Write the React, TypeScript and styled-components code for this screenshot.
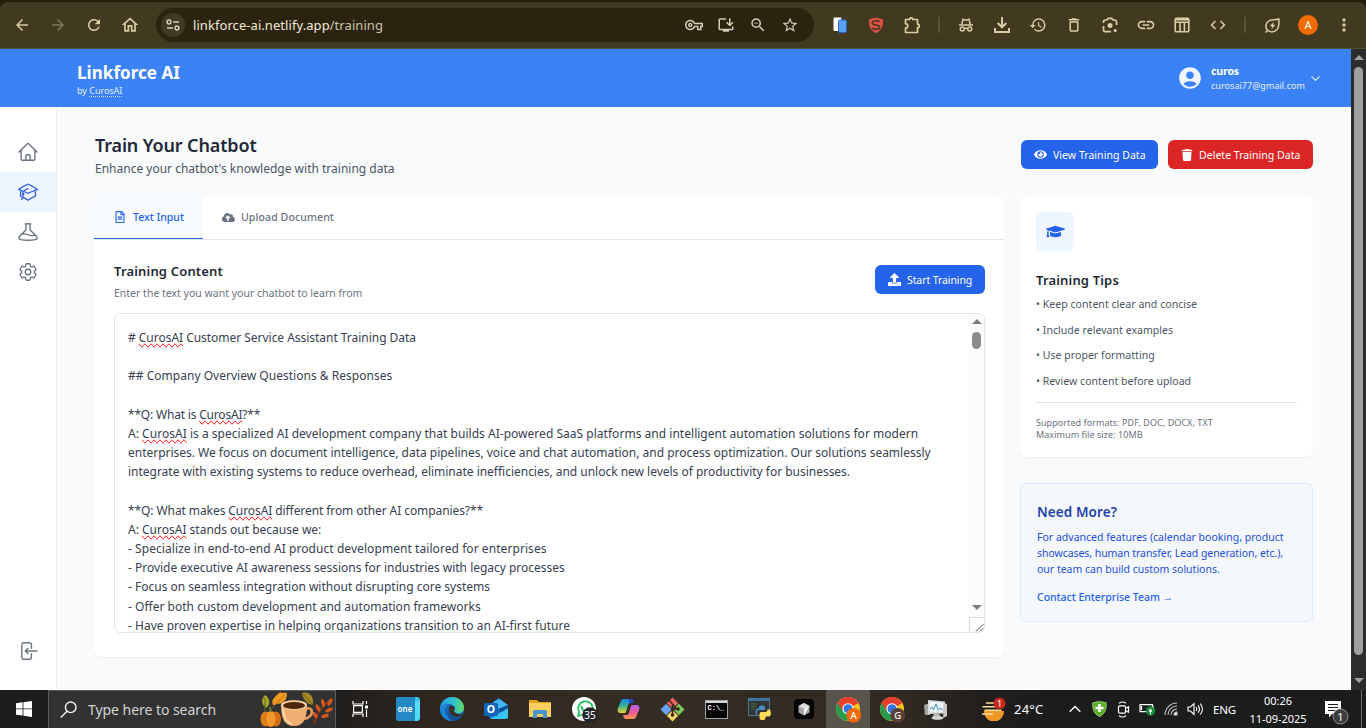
import React from "react";
import styled, { createGlobalStyle, css } from "styled-components";
import {
  MdArrowBack, MdArrowForward, MdRefresh, MdOutlineHome, MdOutlineVpnKey, MdOutlineInstallDesktop,
  MdZoomOut, MdStarBorder, MdOutlineExtension, MdHistory, MdDeleteOutline, MdLink, MdCode,
  MdMoreVert, MdAccountCircle,
} from "react-icons/md";
import {
  HiOutlineHome, HiOutlineAcademicCap, HiOutlineBeaker, HiOutlineCog6Tooth, HiOutlineArrowLeftOnRectangle,
} from "react-icons/hi2";
import { FaRegFileAlt, FaCloudUploadAlt, FaEye, FaTrash, FaUpload, FaGraduationCap } from "react-icons/fa";
import { ChevronDown } from "lucide-react";

const Global = createGlobalStyle`
  *, *::before, *::after { box-sizing: border-box; }
  body { margin: 0; overflow: hidden; font-family: "Noto Sans", "Open Sans", sans-serif; }
  svg { display: block; flex: none; }
`;

const Screen = styled.div`
  display: flex;
  flex-direction: column;
  width: 1366px;
  height: 728px;
  overflow: hidden;
`;

/* ---------- browser toolbar ---------- */

const TabEdge = styled.div`
  height: 49px;
  flex: none;
  padding-top: 2px;
  background: #251d08;
`;
const Toolbar = styled.div`
  display: flex;
  align-items: center;
  height: 47px;
  padding: 0 4px;
  border-bottom: 1px solid #575038;
  border-radius: 8px 8px 0 0;
  background: #413920;
  color: #d8cda5;
`;
const ToolCell = styled.div<{ $dim?: boolean }>`
  display: flex;
  align-items: center;
  justify-content: center;
  width: 36px;
  height: 36px;
  flex: none;
  color: ${(p) => (p.$dim ? "#7f775c" : "inherit")};
`;
const ToolDivider = styled.div`
  width: 2px;
  height: 16px;
  margin: 0 8px;
  background: #5b5338;
`;
const Omnibox = styled.div`
  display: flex;
  align-items: center;
  width: 658px;
  height: 34px;
  margin: 0 8px;
  padding: 0 8px 0 5px;
  border-radius: 17px;
  background: #2b230d;
  color: #d3ccbb;
`;
const SiteInfo = styled.div`
  display: flex;
  align-items: center;
  justify-content: center;
  width: 24px;
  height: 24px;
  border-radius: 50%;
  background: #413920;
`;
const Url = styled.div`
  flex: 1;
  margin-left: 8px;
  font-size: 13px;
  line-height: 18px;
  letter-spacing: 0.065px;
  color: #f0ead8;
`;
const UrlPath = styled.span`
  color: #c9c3ae;
`;
const OmniCell = styled.div`
  display: flex;
  justify-content: center;
  width: 32px;
`;
const Profile = styled.div`
  width: 20px;
  height: 20px;
  border-radius: 50%;
  background: #f06c00;
  color: #fff;
  font-size: 11px;
  line-height: 20px;
  text-align: center;
`;

/* ---------- page ---------- */

const Viewport = styled.div`
  display: flex;
  height: 641px;
  flex: none;
`;
const Page = styled.div`
  display: flex;
  flex-direction: column;
  width: 1351px;
`;
const Header = styled.header`
  display: flex;
  justify-content: space-between;
  height: 58px;
  padding: 13px 28px 0 77px;
  background: #3b82f6;
  color: #fff;
`;
const Logo = styled.div`
  font-size: 17px;
  font-weight: 700;
  line-height: 22px;
  letter-spacing: 0.053px;
`;
const Byline = styled.div`
  font-size: 9px;
  line-height: 13px;
  color: #e3edfe;
`;
const BylineLink = styled.span`
  border-bottom: 1px dotted #cfe0fd;
  display: inline-block;
  line-height: 10px;
  letter-spacing: -0.05px;
`;
const Account = styled.div`
  display: flex;
  height: 32px;
  align-items: center;
`;
const AccountText = styled.div`
  margin: -1px 3px 0 8px;
`;
const AccountName = styled.div`
  font-size: 10.5px;
  font-weight: 700;
  line-height: 15px;
  letter-spacing: -0.11px;
`;
const AccountMail = styled.div`
  font-size: 9px;
  line-height: 13px;
  letter-spacing: 0.044px;
  color: #e6effe;
`;
const Body = styled.div`
  display: flex;
  flex: 1;
`;
const Sidebar = styled.nav`
  display: flex;
  flex-direction: column;
  width: 57px;
  padding: 25px 0 19px;
  border-right: 1px solid #f1f2f4;
  background: #fff;
`;
const SideItem = styled.div<{ $active?: boolean; $last?: boolean }>`
  display: flex;
  align-items: center;
  justify-content: center;
  height: 40px;
  color: ${(p) => (p.$active ? "#3e68df" : "#6b7280")};
  background: ${(p) => (p.$active ? "#eff6ff" : "transparent")};
  ${(p) => p.$last && css`margin-top: auto;`}
`;
const Main = styled.main`
  flex: 1;
  padding: 24px 38px 0 37px;
  background: #f9fafc;
`;
const TitleRow = styled.div`
  display: flex;
  justify-content: space-between;
  height: 65px;
`;
const Title = styled.h1`
  margin: 1px 0 0 1px;
  font-size: 18px;
  font-weight: 600;
  line-height: 26px;
  letter-spacing: -0.14px;
  color: #1f2937;
`;
const Subtitle = styled.div`
  margin: 1px 0 0 1px;
  font-size: 12px;
  line-height: 19px;
  color: #4b5563;
`;
const Actions = styled.div`
  display: flex;
  gap: 10px;
  padding-top: 9px;
`;
const Button = styled.button<{ $color: string; $width: number; $ls: number }>`
  display: flex;
  align-items: center;
  gap: 6px;
  width: ${(p) => p.$width}px;
  height: 29px;
  padding: 0 0 0 13px;
  border: 0;
  border-radius: 6px;
  background: ${(p) => p.$color};
  color: #fff;
  font: 400 10.5px/16px "Noto Sans", sans-serif;
  letter-spacing: ${(p) => p.$ls}px;
  white-space: nowrap;
`;
const Columns = styled.div`
  display: flex;
  align-items: flex-start;
  gap: 16px;
`;
const Card = styled.section`
  border-radius: 7px;
  background: #fff;
  box-shadow: 0 1px 2px rgba(0, 0, 0, 0.05);
`;
const EditorCard = styled(Card)`
  width: 910px;
  height: 461px;
  overflow: hidden;
`;
const Tabs = styled.div`
  display: flex;
  height: 44px;
  border-bottom: 1px solid #e5e7eb;
`;
const Tab = styled.div<{ $active?: boolean }>`
  display: flex;
  align-items: center;
  gap: ${(p) => (p.$active ? 7 : 6)}px;
  height: 43px;
  padding: ${(p) => (p.$active ? "0 19px 0 20px" : "0 19px 1px")};
  font-size: 10.5px;
  font-weight: 500;
  letter-spacing: ${(p) => (p.$active ? 0.014 : 0.122)}px;
  color: ${(p) => (p.$active ? "#2563eb" : "#6b7280")};
  ${(p) => p.$active && css`
    background: #f7fbff;
    border-bottom: 1px solid #2563eb;
  `}
`;
const EditorBody = styled.div`
  padding: 20px 19px 0 20px;
`;
const EditorHead = styled.div`
  display: flex;
  justify-content: space-between;
  height: 53px;
`;
const EditorTitle = styled.h2`
  margin: 1px 0 0;
  font-size: 13px;
  font-weight: 600;
  line-height: 20px;
  letter-spacing: 0.17px;
  color: #1f2937;
`;
const EditorHint = styled.div`
  margin-top: 4px;
  font-size: 10.5px;
  line-height: 16px;
  color: #6b7280;
`;
const StartWrap = styled.div`
  padding-top: 5px;
`;
const TextBox = styled.div`
  display: flex;
  width: 871px;
  height: 320px;
  border: 1px solid #e3e5e9;
  border-radius: 6px;
  overflow: hidden;
`;
const TextLines = styled.div`
  flex: 1;
  padding: 14px 0 0 13px;
  font-size: 12px;
  line-height: 19.2px;
  white-space: pre;
  color: #374151;
`;
const TextLine = styled.div<{ $ls?: number }>`
  height: 19.2px;
  letter-spacing: ${(p) => p.$ls ?? 0}px;
`;
const Misspelled = styled.span`
  text-decoration-line: spelling-error;
`;
const ScrollColumn = styled.div`
  display: flex;
  flex-direction: column;
  align-items: center;
  width: 15px;
  padding-top: 5px;
  background: #fcfcfc;
`;
const Arrow = styled.div<{ $down?: boolean; $color: string }>`
  width: 0;
  height: 0;
  border: 5px solid transparent;
  ${(p) => p.$down
    ? css`border-top-color: ${p.$color}; border-bottom: 0;`
    : css`border-bottom-color: ${p.$color}; border-top: 0;`}
`;
const InnerThumb = styled.div`
  width: 9px;
  height: 17px;
  margin: 8px 0 auto;
  border-radius: 5px;
  background: #8b8b8b;
`;
const Grip = styled.div`
  width: 15px;
  height: 15px;
  margin-top: 7px;
  border-left: 1px solid #dcdcdc;
  border-top: 1px solid #dcdcdc;
  background: #fff;
`;
const SideColumn = styled.aside`
  width: 293px;
`;
const TipsCard = styled(Card)`
  height: 261px;
  padding: 16px;
`;
const CapBadge = styled.div`
  display: flex;
  align-items: center;
  justify-content: center;
  width: 38px;
  height: 39px;
  border-radius: 6px;
  background: #eff6ff;
  color: #2563eb;
`;
const TipsTitle = styled.h2`
  margin: 19px 0 5px;
  font-size: 13px;
  font-weight: 600;
  line-height: 20px;
  letter-spacing: 0.167px;
  color: #1f2937;
`;
const Tip = styled.div`
  height: 25.7px;
  font-size: 10.5px;
  line-height: 19px;
  letter-spacing: 0.045px;
  color: #4b5563;
`;
const Formats = styled.div`
  margin-top: 4px;
  padding-top: 14px;
  border-top: 1px solid #e5e7eb;
  font-size: 9px;
  line-height: 12px;
  letter-spacing: 0.06px;
  color: #6b7280;
`;
const HelpCard = styled.section`
  height: 139px;
  margin-top: 26px;
  padding: 17px 0 0 16px;
  border: 1px solid #dbeafe;
  border-radius: 6px;
  background: #f4f8fd;
`;
const HelpTitle = styled.h2`
  margin: 0 0 6px;
  font-size: 13.5px;
  font-weight: 600;
  line-height: 22px;
  letter-spacing: 0.1px;
  color: #1e40af;
`;
const HelpText = styled.div<{ $ls: number }>`
  font-size: 10.5px;
  line-height: 16px;
  letter-spacing: ${(p) => p.$ls}px;
  white-space: nowrap;
  color: #1d4ed8;
`;
const HelpLink = styled.div`
  margin-top: 12px;
  font-size: 10.5px;
  font-weight: 500;
  line-height: 16px;
  letter-spacing: -0.02px;
  color: #2563eb;
`;
const PageScroll = styled.div`
  display: flex;
  flex-direction: column;
  align-items: center;
  width: 15px;
  padding: 6px 0 7px;
  background: #2c2c2c;
`;
const PageThumb = styled.div`
  flex: 1;
  width: 9px;
  margin: 7px 0 23px;
  border-radius: 5px;
  background: #9f9f9f;
`;

/* ---------- taskbar ---------- */

const Taskbar = styled.footer`
  display: flex;
  align-items: center;
  height: 38px;
  flex: none;
  background: linear-gradient(90deg, #1b1c1c 0, #201e1d 340px, #30271f 430px, #352d24 620px, #312a22 900px, #221f1d 975px, #1b1c1c 1060px, #1b1c1c 100%);
  color: #fff;
`;
const StartButton = styled.div`
  display: flex;
  justify-content: center;
  width: 48px;
`;
const SearchBox = styled.div`
  display: flex;
  align-items: center;
  width: 288px;
  height: 38px;
  padding: 0 2px 0 11px;
  border: 1px solid #5c5c5c;
  border-bottom: 0;
  background: #323232;
`;
const SearchText = styled.span`
  flex: 1;
  margin: 1px 0 0 11px;
  font-size: 14px;
  line-height: 20px;
  letter-spacing: -0.046px;
  color: #d4d4d4;
`;
const TaskCell = styled.div<{ $active?: boolean; $width?: number; $shift?: number }>`
  display: flex;
  align-items: center;
  justify-content: center;
  width: ${(p) => p.$width ?? 44}px;
  height: 38px;
  padding-left: ${(p) => p.$shift ?? 0}px;
  flex: none;
  background: ${(p) => (p.$active ? "#58534d" : "transparent")};
`;
const Temperature = styled.div`
  width: 49px;
  font-size: 13px;
  letter-spacing: 0.2px;
`;
const TrayCell = styled.div`
  display: flex;
  justify-content: center;
  width: 24px;
`;
const Language = styled.div`
  width: 32px;
  padding-left: 6px;
  font-size: 11.5px;
  letter-spacing: -0.15px;
`;
const Clock = styled.div`
  width: 78px;
  padding-top: 1px;
  font-size: 11px;
  line-height: 18px;
  letter-spacing: -0.03px;
  text-align: center;
`;
const Notice = styled.div`
  width: 30px;
  margin: 6px 0 0 7px;
`;
const ShowDesktop = styled.div`
  width: 1px;
  height: 38px;
  margin-left: 7px;
  background: #6b6b6b;
`;

/* ---------- drawings ---------- */

const Tune = () => (
  <svg width="14" height="14" viewBox="0 0 14 14" fill="none" stroke="currentColor" strokeWidth="1.5">
    <circle cx="3" cy="4" r="1.9" /><path d="M7 4h6" /><circle cx="11" cy="10" r="1.9" /><path d="M1 10h6" />
  </svg>
);
const Incognito = () => (
  <svg width="16" height="16" viewBox="0 0 16 16" fill="none" stroke="currentColor" strokeWidth="1.5">
    <path d="M1 8h14M3.8 7.5 5 2.2l3 .9 3-.9 1.2 5.3" /><circle cx="4.3" cy="12" r="2" /><circle cx="11.7" cy="12" r="2" /><path d="M6.3 11.7q1.7-1 3.4 0" />
  </svg>
);
const Download = () => (
  <svg width="18" height="18" viewBox="0 0 18 18" fill="none" stroke="currentColor" strokeWidth="2">
    <path d="M9 1v10M4.7 7 9 11.3 13.3 7M2 12v4h14v-4" />
  </svg>
);
const Lens = () => (
  <svg width="16" height="16" viewBox="0 0 16 16" fill="none" stroke="currentColor" strokeWidth="1.7">
    <path d="M1.5 6V4.8a1.8 1.8 0 0 1 1.8-1.8H5l1.2-1.6h3.6L11 3h1.7a1.8 1.8 0 0 1 1.8 1.8V8M1.5 9v3.8a1.8 1.8 0 0 0 1.8 1.8H9" />
    <circle cx="8" cy="8.4" r="2.5" fill="currentColor" stroke="none" /><circle cx="13.2" cy="13.4" r="1.5" fill="currentColor" stroke="none" />
  </svg>
);
const PuzzlePiece = () => (
  <svg width="17" height="17" viewBox="0 0 17 17" fill="none" stroke="currentColor" strokeWidth="1.700" strokeLinejoin="round">
    <path d="M1.500 2.500h4a1.700 1.700 0 0 1 3.400 0h4.600v4.600a1.800 1.800 0 0 1 0 3.600v4.800h-12v-4.300c3-.3 3-4.200 0-4.500z" />
  </svg>
);
const TableIcon = () => (
  <svg width="16" height="16" viewBox="0 0 16 16" fill="none" stroke="currentColor" strokeWidth="1.6">
    <rect x="1.2" y="1.2" width="13.6" height="13.6" rx="1.4" /><path d="M1 5.2h14M6 5v10M10.4 5v10" /><path d="M1.5 2.5h13" strokeWidth="2" />
  </svg>
);
const Leaf = () => (
  <svg width="17" height="17" viewBox="0 0 17 17" fill="none" stroke="currentColor" strokeWidth="1.5" strokeLinejoin="round">
    <path d="M3.8 13.3C.6 10.5 1.6 5.700 5.300 3.700 8 2.300 11.500 3 15 2c-.2 4 .4 7.500-2 10.500-2.300 2.800-6.400 3.200-9.200.8zM1.500 15.500l2.300-2.200" />
    <path d="M9.800 4.800 5.700 9.300h2.500l-.8 3.300 4.100-4.800H9z" fill="currentColor" stroke="none" />
  </svg>
);
const Clipboards = () => (
  <svg width="14" height="16" viewBox="0 0 14 16">
    <rect x="0.500" y="0.500" width="8" height="13.500" rx="1.200" fill="#fff" /><rect x="5.500" y="3" width="8" height="12.500" rx="1.500" fill="#5aa0ff" stroke="#2867c9" />
  </svg>
);
const Shield = () => (
  <svg width="16" height="17" viewBox="0 0 16 17">
    <path d="M1 2.500Q8-.8 15 2.500c.6 6-1.500 11-7 13.800C2.500 13.500.4 8.500 1 2.500z" fill="#dd5143" />
    <path d="M11.800 4.600C9.500 3.400 4.300 3.500 4.300 6c0 2.600 7.500 1.500 7.500 4.300 0 2.600-5 2.500-7.600.9" fill="none" stroke="#413920" strokeWidth="1.500" />
  </svg>
);
const Windows = () => (
  <svg width="16" height="16" viewBox="0 0 16 16" fill="#fff"><path d="M0 2.200 6.600 1.300v6.200H0zM7.400 1.200 16 0v7.500H7.400zM0 8.300h6.600v6.300L0 13.700zM7.400 8.300H16V16l-8.600-1.200z" /></svg>
);
const Magnifier = () => (
  <svg width="17" height="17" viewBox="0 0 17 17" fill="none" stroke="#f2f2f2" strokeWidth="1.400"><circle cx="10.700" cy="6.300" r="5.300" /><path d="M7 10.200.8 16.400" /></svg>
);
const Autumn = () => (
  <svg width="74" height="37" viewBox="0 0 74 37">
    <path d="M6 4c5 3 6 9 1 13C2 13 2 8 6 4z" fill="#a3a62b" /><path d="M6 7v13" stroke="#5d6a19" />
    <path d="M14 14C12 9 15 7 17 5c1-2 3-2 4-4 2 2 5 0 7 1-1 2 1 3-1 5 0 3-3 3-4 5-2 1-5 0-7 2z" fill="#f09a26" /><path d="M13 17 26 3" stroke="#b86214" strokeWidth=".8" />
    <path d="M43 2c7-2 12 3 11 12-6-1-10-5-11-12z" fill="#a18a23" /><path d="M44 3l11 12" stroke="#62520f" strokeWidth=".8" />
    <path d="M55 33C58 22 64 14 71 9" stroke="#a63a12" strokeWidth="1.300" fill="none" />
    <g fill="#d5551f"><ellipse cx="71" cy="11" rx="1.800" ry="4" transform="rotate(30 71 11)" /><ellipse cx="64" cy="12" rx="1.800" ry="4" transform="rotate(-15 64 12)" /><ellipse cx="70" cy="19" rx="1.800" ry="4" transform="rotate(65 70 19)" /><ellipse cx="59" cy="17" rx="1.800" ry="4" transform="rotate(-25 59 17)" /><ellipse cx="66" cy="25" rx="1.800" ry="4" transform="rotate(75 66 25)" /><ellipse cx="56" cy="24" rx="1.700" ry="3.600" transform="rotate(-35 56 24)" /></g>
    <ellipse cx="6.500" cy="28" rx="5" ry="7.500" fill="#df7d16" /><ellipse cx="17" cy="28" rx="5" ry="7.500" fill="#d96f12" /><ellipse cx="11.800" cy="28" rx="5.500" ry="8" fill="#f2982a" />
    <path d="M8 22c-2 4-2 9 0 12M15.500 22c2 4 2 9 0 12" stroke="#bd5f0d" strokeWidth=".8" fill="none" /><path d="M12 21c0-2-1-3-1-5" stroke="#6d7b22" strokeWidth="2" fill="none" />
    <path d="M46 18c9-4 10 9-2 10" fill="none" stroke="#e69858" strokeWidth="2.600" />
    <path d="M22 14c0 13 3 21 13 21s13-8 13-21z" fill="#f0ae73" /><path d="M24 18c1 9 4 14 9 15" stroke="#ffd9ae" strokeWidth="2" fill="none" />
    <ellipse cx="35" cy="14" rx="13" ry="4.800" fill="#ffd2a3" /><ellipse cx="35" cy="14.500" rx="11" ry="3.600" fill="#4e260e" />
  </svg>
);
const TaskView = () => (
  <svg width="17" height="16" viewBox="0 0 17 16" fill="none" stroke="#fff" strokeWidth="1.200"><path d="M1 0v3h10V0M1 16v-3h10v3M1.600 4.700h8.800v6.600H1.600zM14.500 0v3M14.500 8.500V16" /><path d="M13 4.500h3v3h-3z" fill="#fff" stroke="none" /></svg>
);
const OneApp = () => (
  <svg width="24" height="24" viewBox="0 0 24 24"><rect width="24" height="24" rx="3" fill="#3cc4ea" /><path d="M3 0h16v24H3a3 3 0 0 1-3-3V3a3 3 0 0 1 3-3z" fill="#2388c4" /><path d="M19 4h5v17l-3 3h-2z" fill="#53dcfa" /><text x="1.500" y="14.500" fontFamily="Noto Sans, sans-serif" fontWeight="600" fontSize="8" fill="#fff" textLength="15">one</text></svg>
);
const Edge = () => (
  <svg width="24" height="24" viewBox="0 0 24 24">
    <defs><linearGradient id="eg" x1="0" x2="1"><stop stopColor="#1d9be0" /><stop offset=".6" stopColor="#35c1c9" /><stop offset="1" stopColor="#63db5c" /></linearGradient></defs>
    <circle cx="12" cy="12" r="12" fill="#1668b8" />
    <path d="M0 12C0 5 5.500 0 12 0s12 5 12 10.500c0 4-3 6-6.500 6-3 0-3.700-1-3.700-1.700 0-.7 1-1.300 1-3.300 0-2.500-2.500-4.500-6.300-4.500C4 7 .5 9 0 12z" fill="url(#eg)" />
    <path d="M0 12c.5-3 4-5 8.500-5-3 2-4 5-3.500 8 .7 4.500 4 8 8.500 9C6 24.800 0 19 0 12z" fill="#1b86d4" />
    <path d="M9.500 9.500c-2 4 .5 10 6.500 10.500 3 .2 5-.8 6.700-2L24 18c0-.5-9-.5-10-4-.3-1 .8-1.300.8-2.700 0-2-3.800-3.300-5.300-1.800z" fill="#35302a" />
    <path d="M9 10c-2 5 1 10.500 7 10.800 3 .1 5.200-1.200 6.500-2.300C20.500 22 17 24 13.500 24 8 22.500 6 15 9 10z" fill="#104f96" />
  </svg>
);
const Outlook = () => (
  <svg width="25" height="24" viewBox="0 0 25 24"><path d="M5 8 14.500 1 24 8v12a2 2 0 0 1-2 2H7a2 2 0 0 1-2-2z" fill="#1d6fc4" /><path d="M9 5.500 15 2l9 6v6l-6 3z" fill="#43b7ee" /><path d="M14 12l10-4v13l-2 1z" fill="#0b4c93" /><path d="M6 22 24 11v9a2 2 0 0 1-2 2z" fill="#37c4f2" /><rect x="0" y="6" width="14" height="13" rx="1.500" fill="#1066b7" /><text x="7" y="16.200" textAnchor="middle" fontFamily="Noto Sans, sans-serif" fontSize="10.500" fontWeight="700" fill="#fff">O</text></svg>
);
const Folder = () => (
  <svg width="22" height="20" viewBox="0 0 22 20"><path d="M0 1h8l2 2h12v14H0z" fill="#e3a31a" /><path d="M0 4h22v14H0z" fill="#fbd05c" /><path d="M4 19v-6.500A1.500 1.500 0 0 1 5.500 11h11a1.500 1.500 0 0 1 1.500 1.500V19h-4v-4H8v4z" fill="#4a93d3" /></svg>
);
const WhatsApp = () => (
  <svg width="27" height="27" viewBox="0 0 27 27"><circle cx="13" cy="13" r="12" fill="#fff" /><path d="M7 20l1.200-4A7.200 7.200 0 1 1 11 18.800z" fill="none" stroke="#23c15c" strokeWidth="1.700" /><path d="M10.500 10c0 3 2.500 6 5.500 6" stroke="#23c15c" strokeWidth="2" fill="none" /><circle cx="19" cy="19" r="7.700" fill="#23232b" /><text x="19" y="22.700" textAnchor="middle" fontFamily="Noto Sans, sans-serif" fontSize="10" fill="#fff">35</text></svg>
);
const Copilot = () => (
  <svg width="23" height="22" viewBox="0 0 23 22">
    <defs><linearGradient id="ca" x2="0" y2="1"><stop stopColor="#1a86ea" /><stop offset=".5" stopColor="#36b58e" /><stop offset="1" stopColor="#f0d02e" /></linearGradient><linearGradient id="cb" x2="0" y2="1"><stop stopColor="#b45cf0" /><stop offset=".6" stopColor="#f0618c" /><stop offset="1" stopColor="#f69a4c" /></linearGradient></defs>
    <path d="M7 1h7c2 0 2 2 2.500 4H14c-2 0-2.500 1-3 2.500L8.500 15H4c-3 0-4-2-3-5l2.500-6C4 2 5 1 7 1z" fill="url(#ca)" /><path d="M16 21H9c-2 0-2.500-2-3-4h3c2 0 2.500-1 3-2.500L14.500 7H19c3 0 4 2 3 5l-2.500 6c-.5 2-1.500 3-3.500 3z" fill="url(#cb)" /><path d="M12 1h2c2 0 2 2 2.500 4H14c-1 0-2 .4-2.400 1.200z" fill="#1f49c8" />
  </svg>
);
const Git = () => (
  <svg width="25" height="25" viewBox="0 0 25 25"><g transform="rotate(45 12.500 12.500)"><rect x="4" y="4" width="8" height="8" fill="#f0635a" /><rect x="13" y="4" width="8" height="8" fill="#80c65c" /><rect x="4" y="13" width="8" height="8" fill="#6ba2f2" /><rect x="13" y="13" width="8" height="8" fill="#f5d664" /></g><path d="M9 3l7 8M12.500 8v10M12.500 12h6" stroke="#33291f" strokeWidth="1.500" fill="none" /><circle cx="12.500" cy="12" r="1.800" fill="#33291f" /><circle cx="12.500" cy="18" r="1.800" fill="#33291f" /><circle cx="18" cy="12" r="1.800" fill="#33291f" /></svg>
);
const Terminal = () => (
  <svg width="23" height="19" viewBox="0 0 23 19"><rect x=".5" y=".5" width="22" height="18" fill="#050505" stroke="#a3a3a3" /><path d="M1 1h21v2H1z" fill="#d6d6d6" /><text x="2.500" y="9.500" fontFamily="Liberation Mono, monospace" fontWeight="700" fontSize="7" fill="#fff">C:\_</text></svg>
);
const PythonIcon = () => (
  <svg width="24" height="23" viewBox="0 0 24 23"><rect x=".5" y=".5" width="21" height="17" fill="#353535" stroke="#48779c" /><path d="M1 1h20v2H1z" fill="#3973a4" /><path d="M3 6h6M3 8.500h5M3 11h4" stroke="#477544" /><path d="M9 19v-5a2 2 0 0 1 2-2h6V9.500a2 2 0 0 0-2-2h-2a2 2 0 0 0-2 2v1H9.500c-2.500 0-2.500 7-.5 7z" fill="#4a8dc4" /><path d="M19.500 11.500h1.500c2.500 0 2.500 7 0 7h-3.500v1.500a2 2 0 0 1-2 2h-2a2 2 0 0 1-2-2V16a2 2 0 0 1 2-2h4a2 2 0 0 0 2-2z" fill="#ffdc59" /></svg>
);
const CubeApp = () => (
  <svg width="20" height="20" viewBox="0 0 20 20"><rect width="20" height="20" rx="4" fill="#050505" /><path d="M10 4l5.500 3v6.500L10 16.500l-5.500-3V7z" fill="#a5a5a5" /><path d="M4.500 7 10 10l5.500-3L10 4z" fill="#dcdcdc" /><path d="M10 16.500V10l5.500-3z" fill="#fafafa" /></svg>
);
const Chrome = ({ letter, color }: { letter: string; color: string }) => (
  <svg width="27" height="27" viewBox="0 0 27 27"><circle cx="13" cy="13" r="12" fill="#f8c51f" /><path d="M13 13 2.600 7A12 12 0 0 1 23.400 7z" fill="#e5402f" /><path d="M13 13 2.600 7A12 12 0 0 0 12 25l5-8z" fill="#289c4c" /><path d="M13 7h10.400A12 12 0 0 0 2.600 7l5 8z" fill="#e5402f" /><circle cx="13" cy="12.800" r="5.600" fill="#fff" /><circle cx="13" cy="12.800" r="4.500" fill="#3275e5" /><circle cx="18.700" cy="19.300" r="7.400" fill={color} /><text x="18.700" y="22.700" textAnchor="middle" fontFamily="Noto Sans, sans-serif" fontWeight="500" fontSize="9.500" fill="#fff">{letter}</text></svg>
);
const Monitor = () => (
  <svg width="24" height="21" viewBox="0 0 24 21"><path d="M0 6l6-2v12H1z" fill="#a6a8a4" /><path d="M4 1l17 1.500v12L4 15z" fill="#ddd" /><path d="M6 3l13 1v9L6 13z" fill="#eaf6fd" /><path d="M6 10l2-2 1.500 3L12 5l2 6 2-2 3 2" stroke="#4b8eb8" fill="none" /><path d="M10 15h5l3 4H8z" fill="#b9bab7" /><ellipse cx="13.500" cy="19" rx="6" ry="1.800" fill="#d7d8d4" /><path d="M20 4l3 1v12l-4 2" fill="#c8c8c5" /></svg>
);
const Weather = () => (
  <svg width="25" height="24" viewBox="0 0 25 24"><path d="M3 14h20a10 10 0 0 1-20 1z" fill="#ef9a26" /><path d="M5 6h11M1.500 9.700h15M3.500 13.300h17M1 17h11" stroke="#fbdf96" strokeWidth="1.600" /><circle cx="18.500" cy="6.500" r="6" fill="#c8291e" /><text x="18.500" y="9.800" textAnchor="middle" fontFamily="Noto Sans, sans-serif" fontSize="9" fill="#fff">1</text></svg>
);
const TrayChevron = () => (
  <svg width="12" height="8" viewBox="0 0 12 8" fill="none" stroke="#fff" strokeWidth="1.400"><path d="M.7 6.700 6 1.400l5.300 5.300" /></svg>
);
const TrayShield = () => (
  <svg width="15" height="16" viewBox="0 0 15 16"><path d="M.8 1.800Q7.500-.6 14.200 1.800c.4 6-1 11-6.700 13.800C1.800 12.800.4 7.800.8 1.800z" fill="#59ad2b" stroke="#a8d882" strokeWidth=".8" /><path d="M7.500 3v8M3.500 7h8" stroke="#fff" strokeWidth="2.400" /></svg>
);
const TrayCamera = () => (
  <svg width="13" height="17" viewBox="0 0 13 17" fill="none" stroke="#fff" strokeWidth="1.200"><rect x="1.500" y="4.800" width="7" height="7.400" rx="1.200" /><path d="M8.500 7.500l3-1.700v5.400l-3-1.700M2 2.300Q5.500-.3 9 2.300M2 14.700q3.500 2.600 7 0" /></svg>
);
const TrayBattery = () => (
  <svg width="17" height="14" viewBox="0 0 17 14"><path d="M1 2.600h12.500v7H1zM14.500 4.500v3M2.500 4v4" fill="none" stroke="#fff" strokeWidth="1.200" /><circle cx="11.500" cy="9" r="4.700" fill="#168b3c" /><path d="M11.500 6.500c2 1.500 2 3.500 0 4.300-2-.8-2-2.800 0-4.300z" fill="#fff" /><path d="M11.500 10v2.500" stroke="#fff" /></svg>
);
const TrayWifi = () => (
  <svg width="14" height="14" viewBox="0 0 14 14" fill="none" stroke="#c5c5c5" strokeWidth="1.100"><path d="M1 13A12 12 0 0 1 13 1M4 13a9 9 0 0 1 9-9M7 13a6 6 0 0 1 6-6" /><path d="M10 13a3 3 0 0 1 3-3v3z" fill="#fff" /></svg>
);
const TrayVolume = () => (
  <svg width="17" height="14" viewBox="0 0 17 14" fill="none" stroke="#fff" strokeWidth="1.100"><path d="M1 5h2.500L7 1.500v11L3.500 9H1zM9 5q1.500 2 0 4M11 3.300q3 3.700 0 7.400M13.300 1.600q4.200 5.400 0 10.800" /></svg>
);
const NoticeIcon = () => (
  <svg width="26" height="25" viewBox="0 0 26 25"><path d="M1 1h16v13H8l-3 3.500V14H1z" fill="#fff" /><path d="M4 4.500h10M4 7.500h10M4 10.500h7" stroke="#1b1c1c" strokeWidth="1.200" /><circle cx="16.500" cy="16.500" r="7.500" fill="#3c3d3d" stroke="#919191" /><text x="16.500" y="20.500" textAnchor="middle" fontFamily="Noto Sans, sans-serif" fontSize="11" fill="#fff">1</text></svg>
);
const GripLines = () => (
  <svg width="14" height="14" viewBox="0 0 14 14" stroke="#555" strokeWidth="1"><path d="M6 13.500 13.500 6M10 13.500l3.500-3.500" /></svg>
);

/* ---------- content ---------- */

const lines: { text: string; ls?: number }[] = [
  { text: "# CurosAI Customer Service Assistant Training Data", ls: -0.031 },
  { text: "" },
  { text: "## Company Overview Questions & Responses", ls: 0.02 },
  { text: "" },
  { text: "**Q: What is CurosAI?**", ls: -0.19 },
  { text: "A: CurosAI is a specialized AI development company that builds AI-powered SaaS platforms and intelligent automation solutions for modern", ls: 0.025 },
  { text: "enterprises. We focus on document intelligence, data pipelines, voice and chat automation, and process optimization. Our solutions seamlessly", ls: -0.015 },
  { text: "integrate with existing systems to reduce overhead, eliminate inefficiencies, and unlock new levels of productivity for businesses.", ls: -0.017 },
  { text: "" },
  { text: "**Q: What makes CurosAI different from other AI companies?**", ls: -0.085 },
  { text: "A: CurosAI stands out because we:" },
  { text: "- Specialize in end-to-end AI product development tailored for enterprises", ls: 0.065 },
  { text: "- Provide executive AI awareness sessions for industries with legacy processes", ls: -0.015 },
  { text: "- Focus on seamless integration without disrupting core systems" },
  { text: "- Offer both custom development and automation frameworks", ls: 0.015 },
  { text: "- Have proven expertise in helping organizations transition to an AI-first future", ls: 0.018 },
];
const withSpelling = (text: string) =>
  text.split(/(CurosAI)/).map((part, i) => (part === "CurosAI" ? <Misspelled key={i}>{part}</Misspelled> : part));

const tips = ["Keep content clear and concise", "Include relevant examples", "Use proper formatting", "Review content before upload"];
const helpLines = [
  { text: "For advanced features (calendar booking, product", ls: 0.013 },
  { text: "showcases, human transfer, Lead generation, etc.),", ls: -0.06 },
  { text: "our team can build custom solutions.", ls: 0 },
];
const taskApps = [OneApp, Edge, Outlook, Folder, WhatsApp, Copilot, Git, Terminal, PythonIcon, CubeApp];

export default function App() {
  return (
    <Screen>
      <Global />
      <TabEdge>
        <Toolbar>
          <ToolCell><MdArrowBack size={18} /></ToolCell>
          <ToolCell $dim><MdArrowForward size={18} /></ToolCell>
          <ToolCell><MdRefresh size={18} /></ToolCell>
          <ToolCell><MdOutlineHome size={20} /></ToolCell>
          <Omnibox>
            <SiteInfo><Tune /></SiteInfo>
            <Url>linkforce-ai.netlify.app<UrlPath>/training</UrlPath></Url>
            <OmniCell><MdOutlineVpnKey size={18} /></OmniCell>
            <OmniCell><MdOutlineInstallDesktop size={18} /></OmniCell>
            <OmniCell><MdZoomOut size={18} /></OmniCell>
            <OmniCell><MdStarBorder size={18} /></OmniCell>
          </Omnibox>
          <ToolCell><Clipboards /></ToolCell>
          <ToolCell><Shield /></ToolCell>
          <ToolCell><PuzzlePiece /></ToolCell>
          <ToolDivider />
          <ToolCell><Incognito /></ToolCell>
          <ToolCell><Download /></ToolCell>
          <ToolCell><MdHistory size={18} /></ToolCell>
          <ToolCell><MdDeleteOutline size={18} /></ToolCell>
          <ToolCell><Lens /></ToolCell>
          <ToolCell><MdLink size={20} /></ToolCell>
          <ToolCell><TableIcon /></ToolCell>
          <ToolCell><MdCode size={18} /></ToolCell>
          <ToolDivider />
          <ToolCell><Leaf /></ToolCell>
          <ToolCell><Profile>A</Profile></ToolCell>
          <ToolCell><MdMoreVert size={20} /></ToolCell>
        </Toolbar>
      </TabEdge>

      <Viewport>
        <Page>
          <Header>
            <div>
              <Logo>Linkforce AI</Logo>
              <Byline>by <BylineLink>CurosAI</BylineLink></Byline>
            </div>
            <Account>
              <MdAccountCircle size={26} color="#eff5ff" />
              <AccountText>
                <AccountName>curos</AccountName>
                <AccountMail>curosai77@gmail.com</AccountMail>
              </AccountText>
              <ChevronDown size={15} color="#dbe8fe" />
            </Account>
          </Header>
          <Body>
            <Sidebar>
              <SideItem><HiOutlineHome size={22} /></SideItem>
              <SideItem $active><HiOutlineAcademicCap size={22} /></SideItem>
              <SideItem><HiOutlineBeaker size={22} /></SideItem>
              <SideItem><HiOutlineCog6Tooth size={22} /></SideItem>
              <SideItem $last><HiOutlineArrowLeftOnRectangle size={22} /></SideItem>
            </Sidebar>
            <Main>
              <TitleRow>
                <div>
                  <Title>Train Your Chatbot</Title>
                  <Subtitle>Enhance your chatbot's knowledge with training data</Subtitle>
                </div>
                <Actions>
                  <Button $color="#2563eb" $width={137} $ls={0.04}><FaEye size={13} />View Training Data</Button>
                  <Button $color="#dc2626" $width={145} $ls={0.03}><FaTrash size={12} />Delete Training Data</Button>
                </Actions>
              </TitleRow>
              <Columns>
                <EditorCard>
                  <Tabs>
                    <Tab $active><FaRegFileAlt size={12} />Text Input</Tab>
                    <Tab><FaCloudUploadAlt size={13} />Upload Document</Tab>
                  </Tabs>
                  <EditorBody>
                    <EditorHead>
                      <div>
                        <EditorTitle>Training Content</EditorTitle>
                        <EditorHint>Enter the text you want your chatbot to learn from</EditorHint>
                      </div>
                      <StartWrap>
                        <Button $color="#2563eb" $width={110} $ls={-0.09}><FaUpload size={13} />Start Training</Button>
                      </StartWrap>
                    </EditorHead>
                    <TextBox>
                      <TextLines>
                        {lines.map((l, i) => <TextLine key={i} $ls={l.ls}>{withSpelling(l.text)}</TextLine>)}
                      </TextLines>
                      <ScrollColumn>
                        <Arrow $color="#7d7d7d" />
                        <InnerThumb />
                        <Arrow $down $color="#7d7d7d" />
                        <Grip><GripLines /></Grip>
                      </ScrollColumn>
                    </TextBox>
                  </EditorBody>
                </EditorCard>
                <SideColumn>
                  <TipsCard>
                    <CapBadge><FaGraduationCap size={19} /></CapBadge>
                    <TipsTitle>Training Tips</TipsTitle>
                    {tips.map((t) => <Tip key={t}>• {t}</Tip>)}
                    <Formats>Supported formats: PDF, DOC, DOCX, TXT<br />Maximum file size: 10MB</Formats>
                  </TipsCard>
                  <HelpCard>
                    <HelpTitle>Need More?</HelpTitle>
                    {helpLines.map((l) => <HelpText key={l.text} $ls={l.ls}>{l.text}</HelpText>)}
                    <HelpLink>Contact Enterprise Team →</HelpLink>
                  </HelpCard>
                </SideColumn>
              </Columns>
            </Main>
          </Body>
        </Page>
        <PageScroll>
          <Arrow $color="#9f9f9f" />
          <PageThumb />
          <Arrow $down $color="#9f9f9f" />
        </PageScroll>
      </Viewport>

      <Taskbar>
        <StartButton><Windows /></StartButton>
        <SearchBox>
          <Magnifier />
          <SearchText>Type here to search</SearchText>
          <Autumn />
        </SearchBox>
        <TaskCell $width={48}><TaskView /></TaskCell>
        <TaskCell $width={46} $shift={2}><OneApp /></TaskCell>
        {taskApps.slice(1).map((Icon, i) => <TaskCell key={i}><Icon /></TaskCell>)}
        <TaskCell $active><Chrome letter="A" color="#ee6a05" /></TaskCell>
        <TaskCell><Chrome letter="G" color="#5b4038" /></TaskCell>
        <TaskCell><Monitor /></TaskCell>
        <TaskCell $width={56} $shift={15}><Weather /></TaskCell>
        <Temperature>24°C</Temperature>
        <TrayCell><TrayChevron /></TrayCell>
        <TrayCell><TrayShield /></TrayCell>
        <TrayCell><TrayCamera /></TrayCell>
        <TrayCell><TrayBattery /></TrayCell>
        <TrayCell><TrayWifi /></TrayCell>
        <TrayCell><TrayVolume /></TrayCell>
        <Language>ENG</Language>
        <Clock>00:26<br />11-09-2025</Clock>
        <Notice><NoticeIcon /></Notice>
        <ShowDesktop />
      </Taskbar>
    </Screen>
  );
}
